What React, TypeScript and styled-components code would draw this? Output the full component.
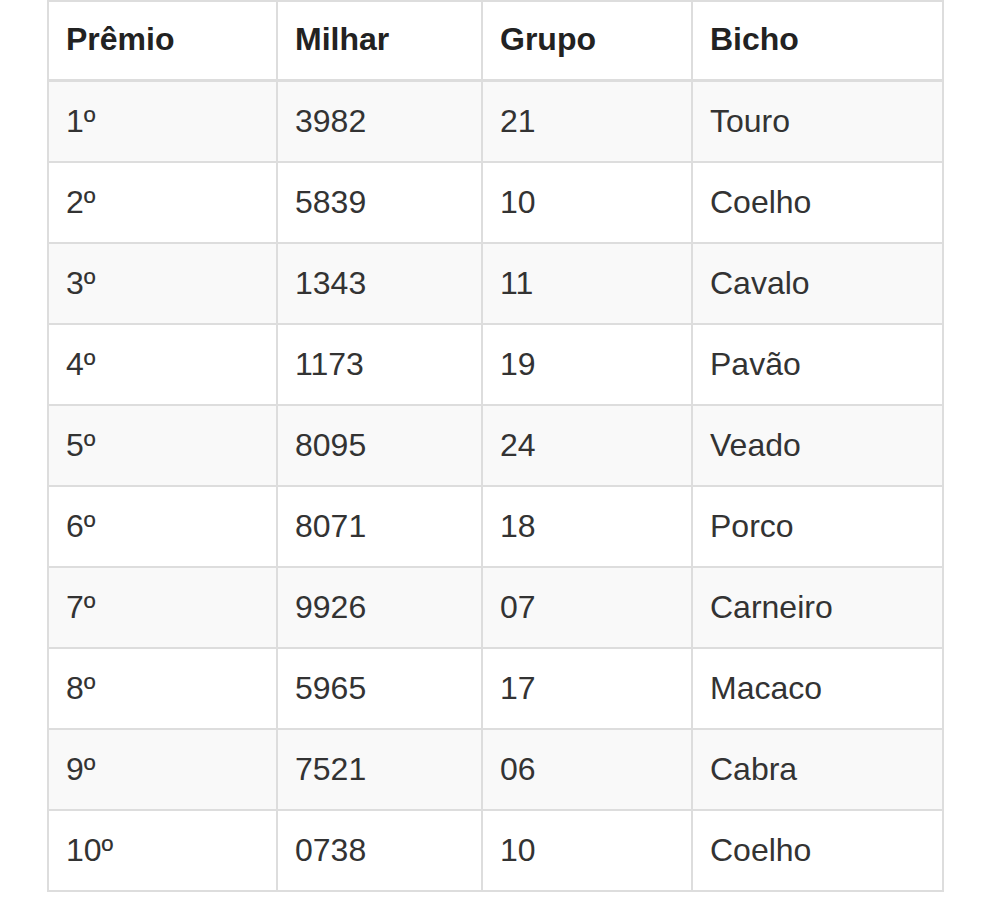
import styled, { createGlobalStyle } from 'styled-components';

const GlobalStyle = createGlobalStyle`
  html, body {
    margin: 0;
    padding: 0;
    background: #ffffff;
  }
  body {
    font-family: "Liberation Sans", Arial, Helvetica, sans-serif;
    color: #333333;
  }
`;

const Page = styled.div`
  padding: 0 0 0 47px;
`;

const Table = styled.table`
  width: 897px;
  border-collapse: collapse;
  border-spacing: 0;
  border: 2px solid #dddddd;
  font-family: "Liberation Sans", Arial, Helvetica, sans-serif;
  font-size: 32px;
  line-height: 45px;
  color: #333333;
  table-layout: fixed;
`;

const HeadCell = styled.th<{ $w: number }>`
  box-sizing: border-box;
  width: ${({ $w }) => $w}px;
  text-align: left;
  font-weight: bold;
  color: #222222;
  padding: 15px 17px 17px 17px;
  border: 2px solid #dddddd;
  border-bottom: 3px solid #dddddd;
`;

const Row = styled.tr<{ $striped: boolean }>`
  background: ${({ $striped }) => ($striped ? '#f9f9f9' : '#ffffff')};
`;

const Cell = styled.td`
  padding: 17px;
  border: 2px solid #dddddd;
  vertical-align: top;
`;

const results = [
  { premio: '1º', milhar: '3982', grupo: '21', bicho: 'Touro' },
  { premio: '2º', milhar: '5839', grupo: '10', bicho: 'Coelho' },
  { premio: '3º', milhar: '1343', grupo: '11', bicho: 'Cavalo' },
  { premio: '4º', milhar: '1173', grupo: '19', bicho: 'Pavão' },
  { premio: '5º', milhar: '8095', grupo: '24', bicho: 'Veado' },
  { premio: '6º', milhar: '8071', grupo: '18', bicho: 'Porco' },
  { premio: '7º', milhar: '9926', grupo: '07', bicho: 'Carneiro' },
  { premio: '8º', milhar: '5965', grupo: '17', bicho: 'Macaco' },
  { premio: '9º', milhar: '7521', grupo: '06', bicho: 'Cabra' },
  { premio: '10º', milhar: '0738', grupo: '10', bicho: 'Coelho' },
];

const columns = [
  { label: 'Prêmio', width: 229 },
  { label: 'Milhar', width: 205 },
  { label: 'Grupo', width: 210 },
  { label: 'Bicho', width: 251 },
];

export default function App() {
  return (
    <Page>
      <GlobalStyle />
      <Table>
        <thead>
          <tr>
            {columns.map((c) => (
              <HeadCell key={c.label} $w={c.width}>
                {c.label}
              </HeadCell>
            ))}
          </tr>
        </thead>
        <tbody>
          {results.map((r, i) => (
            <Row key={r.premio} $striped={i % 2 === 0}>
              <Cell>{r.premio}</Cell>
              <Cell>{r.milhar}</Cell>
              <Cell>{r.grupo}</Cell>
              <Cell>{r.bicho}</Cell>
            </Row>
          ))}
        </tbody>
      </Table>
    </Page>
  );
}
